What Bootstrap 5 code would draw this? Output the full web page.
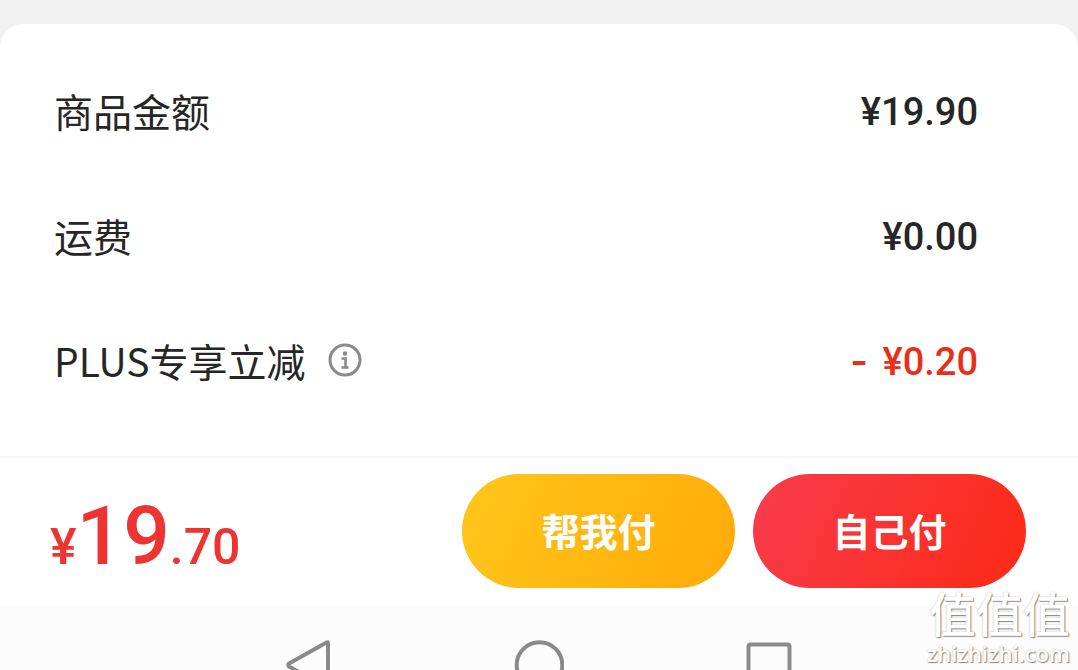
<!DOCTYPE html>
<html lang="zh-CN">
<head>
<meta charset="utf-8">
<meta name="viewport" content="width=device-width, initial-scale=1">
<title>订单结算</title>
<link href="https://cdn.jsdelivr.net/npm/bootstrap@5.3.0/dist/css/bootstrap.min.css" rel="stylesheet">
<style>
  body { background: #f1f1f1; color: #262626; font-family: "Noto Sans CJK SC", sans-serif; }
  .sheet { background: #fff; border-radius: 24px 24px 0 0; }
  .fees { padding: 25px 100px 32px 54px; }
  .fee-row { min-height: 125px; font-size: 39px; line-height: 56px; }
  .fee-row dt { font-weight: 400; padding-bottom: 4px; }
  .amount { font-family: Roboto, sans-serif; font-weight: 500; font-size: 38px; }
  .discount { color: #e92f17; }
  .minus { font-family: Inter, sans-serif; font-weight: 600; margin-right: 5px; }
  .info-btn { width: 34px; height: 34px; margin-left: 22px; }
  .paybar { border-top: 2px solid #f6f6f6; padding: 16px 52px 18px 50px; }
  .total { font-family: Roboto, sans-serif; font-weight: 500; font-size: 50px; line-height: 80px; padding-top: 20px; color: #ee3333; }
  .total-int { font-size: 82px; }
  .pay-actions { gap: 18px; }
  .pay { width: 273px; height: 114px; padding: 0 0 4px; font-size: 38px; font-weight: 700; color: #fff; border: 0; }
  .pay:hover { color: #fff; }
  .pay-friend { background: linear-gradient(115deg, #ffc61c, #ffaa08); }
  .pay-self { background: linear-gradient(115deg, #f73c4c, #fd2a16); }
  .sysnav { background: #fcfcfc; gap: 180px; padding-top: 34px; height: 0; }
  .sysnav svg { width: 50px; height: 50px; display: block; }
  .watermark { right: 8px; bottom: 4px; color: #fff; text-shadow: 1px 1px 1px #888, 0 0 2px #bbb; }
  .wm-logo { font-size: 47px; line-height: 56px; font-weight: 500; }
  .wm-site { font-family: "Open Sans", sans-serif; font-size: 22px; line-height: 26px; font-weight: 600; }
</style>
</head>
<body>
<div class="vh-100 d-flex flex-column position-relative overflow-hidden pt-4">
  <main class="sheet">
    <dl class="fees m-0">
      <div class="fee-row d-flex align-items-center justify-content-between">
        <dt>商品金额</dt><dd class="amount m-0">¥19.90</dd>
      </div>
      <div class="fee-row d-flex align-items-center justify-content-between">
        <dt>运费</dt><dd class="amount m-0">¥0.00</dd>
      </div>
      <div class="fee-row d-flex align-items-center justify-content-between">
        <dt class="d-flex align-items-center">PLUS专享立减
          <button type="button" class="info-btn btn p-0 border-0 d-flex" aria-label="优惠说明">
            <svg viewBox="0 0 34 34" width="34" height="34" fill="none" stroke="#8a8a8a" aria-hidden="true">
              <circle cx="17" cy="17" r="15" stroke-width="3"/>
              <circle cx="17" cy="10.500" r="2.300" fill="#8a8a8a" stroke="none"/>
              <path d="M13.500 15.500H17.500V24M13.500 24.500H20.500" stroke-width="2.600"/>
            </svg>
          </button>
        </dt>
        <dd class="amount discount m-0"><span class="minus">-</span> ¥0.20</dd>
      </div>
    </dl>
    <div class="paybar d-flex align-items-center justify-content-between">
      <div class="total text-nowrap">¥<span class="total-int">19</span>.70</div>
      <div class="pay-actions d-flex">
        <button type="button" class="pay pay-friend btn rounded-pill">帮我付</button>
        <button type="button" class="pay pay-self btn rounded-pill">自己付</button>
      </div>
    </div>
  </main>
  <nav class="sysnav flex-fill d-flex justify-content-center align-items-start overflow-hidden" aria-label="系统导航">
    <a href="#" aria-label="返回"><svg viewBox="0 0 50 50" fill="none" stroke="#8a8a8a" stroke-width="4" stroke-linejoin="round"><path d="M42.500 2.500Q44 1.500 44 3.500V46.500Q44 48.500 42.500 47.500L5 26.500Q3.500 25 5 23.500Z"/></svg></a>
    <a href="#" aria-label="主页"><svg viewBox="0 0 50 50" fill="none" stroke="#8a8a8a" stroke-width="4"><circle cx="25.500" cy="25" r="22.800"/></svg></a>
    <a href="#" aria-label="最近任务"><svg viewBox="0 0 50 50" fill="none" stroke="#8a8a8a" stroke-width="4"><rect x="4.500" y="4.500" width="41" height="41" rx="2"/></svg></a>
  </nav>
  <div class="watermark position-absolute text-end pe-none">
    <div class="wm-logo">值值值</div>
    <div class="wm-site">zhizhizhi.com</div>
  </div>
</div>
<script src="https://cdn.jsdelivr.net/npm/bootstrap@5.3.0/dist/js/bootstrap.bundle.min.js"></script>
</body>
</html>
